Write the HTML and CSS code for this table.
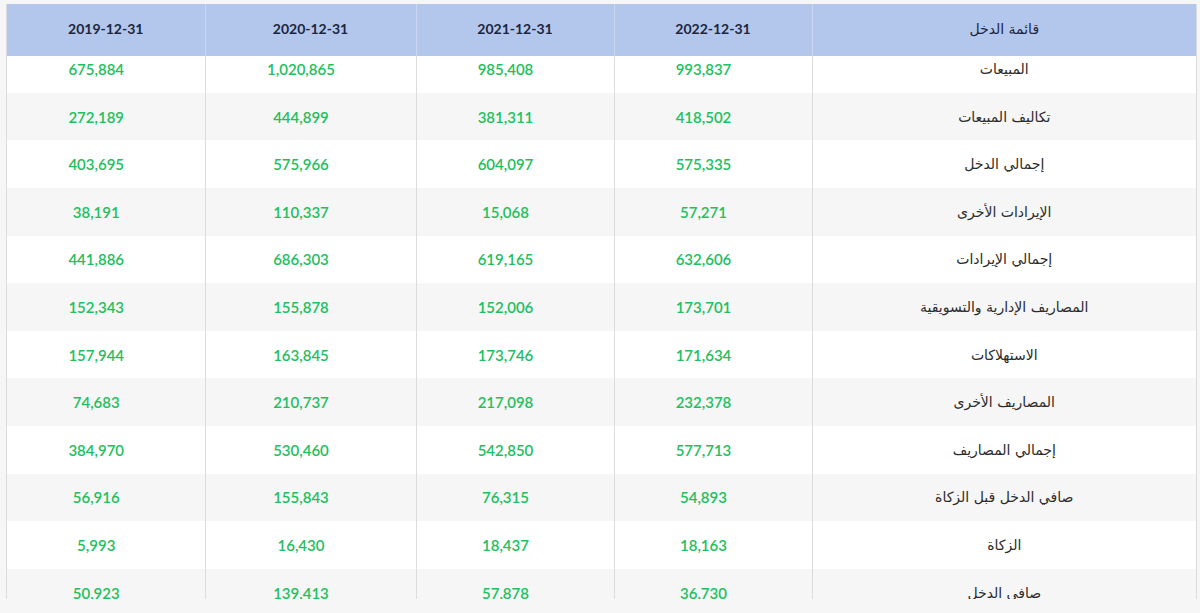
FILE: index.html
```html
<!DOCTYPE html>
<html lang="ar">
<head>
<meta charset="utf-8">
<title>قائمة الدخل</title>
<link rel="stylesheet" href="styles.css">
</head>
<body>
<div class="frame">
  <table class="grid head" dir="rtl">
    <colgroup><col class="c-label"><col class="c-a"><col class="c-b"><col class="c-c"><col class="c-d"></colgroup>
    <thead>
      <tr><th class="label">قائمة الدخل</th><th>2022-12-31</th><th>2021-12-31</th><th>2020-12-31</th><th>2019-12-31</th></tr>
    </thead>
  </table>
  <div class="viewport">
    <table class="grid body" dir="rtl">
      <colgroup><col class="c-label"><col class="c-a"><col class="c-b"><col class="c-c"><col class="c-d"></colgroup>
      <tbody>
        <tr><td class="label">المبيعات</td><td>993,837</td><td>985,408</td><td>1,020,865</td><td>675,884</td></tr>
        <tr><td class="label">تكاليف المبيعات</td><td>418,502</td><td>381,311</td><td>444,899</td><td>272,189</td></tr>
        <tr><td class="label">إجمالي الدخل</td><td>575,335</td><td>604,097</td><td>575,966</td><td>403,695</td></tr>
        <tr><td class="label">الإيرادات الأخرى</td><td>57,271</td><td>15,068</td><td>110,337</td><td>38,191</td></tr>
        <tr><td class="label">إجمالي الإيرادات</td><td>632,606</td><td>619,165</td><td>686,303</td><td>441,886</td></tr>
        <tr><td class="label">المصاريف الإدارية والتسويقية</td><td>173,701</td><td>152,006</td><td>155,878</td><td>152,343</td></tr>
        <tr><td class="label">الاستهلاكات</td><td>171,634</td><td>173,746</td><td>163,845</td><td>157,944</td></tr>
        <tr><td class="label">المصاريف الأخرى</td><td>232,378</td><td>217,098</td><td>210,737</td><td>74,683</td></tr>
        <tr><td class="label">إجمالي المصاريف</td><td>577,713</td><td>542,850</td><td>530,460</td><td>384,970</td></tr>
        <tr><td class="label">صافي الدخل قبل الزكاة</td><td>54,893</td><td>76,315</td><td>155,843</td><td>56,916</td></tr>
        <tr><td class="label">الزكاة</td><td>18,163</td><td>18,437</td><td>16,430</td><td>5,993</td></tr>
        <tr><td class="label">صافي الدخل</td><td>36,730</td><td>57,878</td><td>139,413</td><td>50,923</td></tr>
      </tbody>
    </table>
  </div>
</div>
</body>
</html>
```

FILE: styles.css
```css
html, body {
  margin: 0;
  padding: 0;
  background: #f6f6f6;
}

body {
  padding: 4px 3px 0 6px;
  font-family: "Lato", "DejaVu Sans", sans-serif;
}

.frame {
  width: 1191px;
  height: 595px;
  background: #ffffff;
  border-left: 1px solid #dcdcdc;
  border-right: 1px solid #dcdcdc;
  box-sizing: border-box;
  display: flex;
  flex-direction: column;
}

.grid {
  width: 1189px;
  border-collapse: collapse;
  table-layout: fixed;
}

.c-label { width: 384px; }
.c-a { width: 198px; }
.c-b { width: 198px; }
.c-c { width: 211px; }
.c-d { width: 198px; }

.head th {
  height: 52px;
  padding: 0 0 3px;
  box-sizing: border-box;
  background: #b3c7ec;
  color: #1b2540;
  font-family: "Lato", "DejaVu Sans", sans-serif;
  font-weight: 700;
  font-size: 14px;
  text-align: center;
  border-left: 1px solid #c9d7f2;
}

.head th:last-child {
  border-left: none;
}

.head th.label {
  font-family: "DejaVu Sans", sans-serif;
  font-weight: 400;
  font-size: 14px;
  color: #1b2540;
}

.viewport {
  flex: 1;
  overflow: hidden;
}

.body {
  margin-top: -10.8px;
}

.body tr {
  height: 47.6px;
}

.body tr:nth-child(even) td {
  background: #f6f6f6;
}

.body td {
  padding: 0 19px 0 0;
  text-align: center;
  vertical-align: middle;
  color: #21c05e;
  font-weight: 600;
  font-size: 15px;
  border-left: 1px solid #dcdcdc;
}

.body td:last-child {
  border-left: none;
}

.body td.label {
  padding: 0;
  color: #2b2b2b;
  font-weight: 400;
  font-size: 14px;
  font-family: "DejaVu Sans", sans-serif;
}
```
